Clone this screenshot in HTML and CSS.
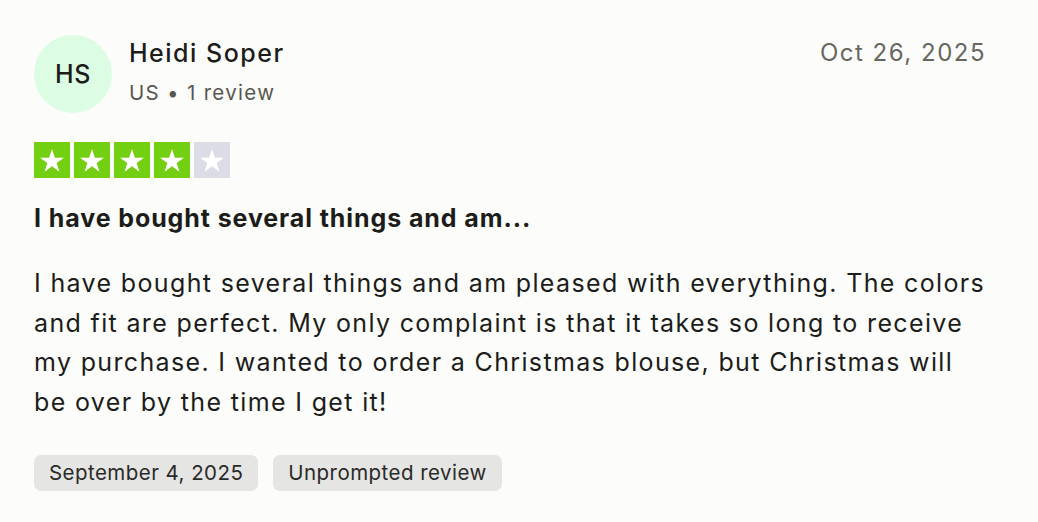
FILE: index.html
```html
<!DOCTYPE html>
<html>
<head>
<meta charset="utf-8">
<link rel="stylesheet" href="styles.css">
</head>
<body>
<article class="review">
  <header class="head">
    <div class="user">
      <div class="avatar">HS</div>
      <div class="who">
        <div class="name">Heidi Soper</div>
        <div class="meta">US • 1 review</div>
      </div>
    </div>
    <time class="date">Oct 26, 2025</time>
  </header>
  <div class="stars">
    <span class="star on"><svg viewBox="0 0 24 24"><path d="M12 3.2l2.35 6.9h7.25l-5.87 4.26 2.24 6.94L12 17.03 6.03 21.3l2.24-6.94L2.4 10.1h7.25z"/></svg></span>
    <span class="star on"><svg viewBox="0 0 24 24"><path d="M12 3.2l2.35 6.9h7.25l-5.87 4.26 2.24 6.94L12 17.03 6.03 21.3l2.24-6.94L2.4 10.1h7.25z"/></svg></span>
    <span class="star on"><svg viewBox="0 0 24 24"><path d="M12 3.2l2.35 6.9h7.25l-5.87 4.26 2.24 6.94L12 17.03 6.03 21.3l2.24-6.94L2.4 10.1h7.25z"/></svg></span>
    <span class="star on"><svg viewBox="0 0 24 24"><path d="M12 3.2l2.35 6.9h7.25l-5.87 4.26 2.24 6.94L12 17.03 6.03 21.3l2.24-6.94L2.4 10.1h7.25z"/></svg></span>
    <span class="star off"><svg viewBox="0 0 24 24"><path d="M12 3.2l2.35 6.9h7.25l-5.87 4.26 2.24 6.94L12 17.03 6.03 21.3l2.24-6.94L2.4 10.1h7.25z"/></svg></span>
  </div>
  <h2 class="title">I have bought several things and am...</h2>
  <p class="body">I have bought several things and am pleased with everything. The colors and fit are perfect. My only complaint is that it takes so long to receive my purchase. I wanted to order a Christmas blouse, but Christmas will be over by the time I get it!</p>
  <div class="tags">
    <span class="tag">September 4, 2025</span>
    <span class="tag">Unprompted review</span>
  </div>
</article>
</body>
</html>
```
FILE: styles.css
```css
html, body {
  margin: 0;
  padding: 0;
  background: #fcfcfb;
}
body {
  font-family: Inter, "Noto Sans", "Liberation Sans", sans-serif;
  color: #1c1c1a;
}
.review {
  padding: 35px 52px 0 34px;
}
.head {
  display: flex;
  justify-content: space-between;
  align-items: flex-start;
}
.user {
  display: flex;
  align-items: flex-start;
  gap: 17px;
}
.avatar {
  width: 78px;
  height: 78px;
  border-radius: 50%;
  background: #dcfce3;
  display: flex;
  align-items: center;
  justify-content: center;
  font-size: 25px;
  font-weight: 500;
  letter-spacing: 0.6px;
  color: #1c1c1a;
}
.who {
  padding-top: 3px;
}
.name {
  font-size: 25px;
  font-weight: 500;
  line-height: 30px;
  letter-spacing: 1.5px;
}
.meta {
  font-size: 20.5px;
  line-height: 26px;
  color: #58574f;
  margin-top: 12px;
  letter-spacing: 1.3px;
}
.date {
  font-size: 24px;
  line-height: 30px;
  color: #67665f;
  padding-top: 3px;
  letter-spacing: 1.5px;
}
.stars {
  display: flex;
  gap: 4px;
  margin-top: 29px;
}
.star {
  width: 36px;
  height: 36px;
  display: flex;
  align-items: center;
  justify-content: center;
}
.star svg {
  width: 30px;
  height: 30px;
  fill: #fff;
}
.star.on { background: #73cf11; }
.star.off { background: #dcdce6; }
.title {
  margin: 24px 0 0;
  font-size: 25px;
  font-weight: 700;
  line-height: 32px;
  letter-spacing: 0.9px;
}
.body {
  margin: 30px 0 0;
  font-size: 25px;
  line-height: 39.7px;
  letter-spacing: 1.35px;
}
.tags {
  display: flex;
  gap: 15px;
  margin-top: 32px;
}
.tag {
  background: #e5e5e4;
  border-radius: 7px;
  height: 36px;
  padding: 0 15px;
  display: flex;
  align-items: center;
  font-size: 20.5px;
  letter-spacing: 0.45px;
  color: #2a2a28;
}
```
